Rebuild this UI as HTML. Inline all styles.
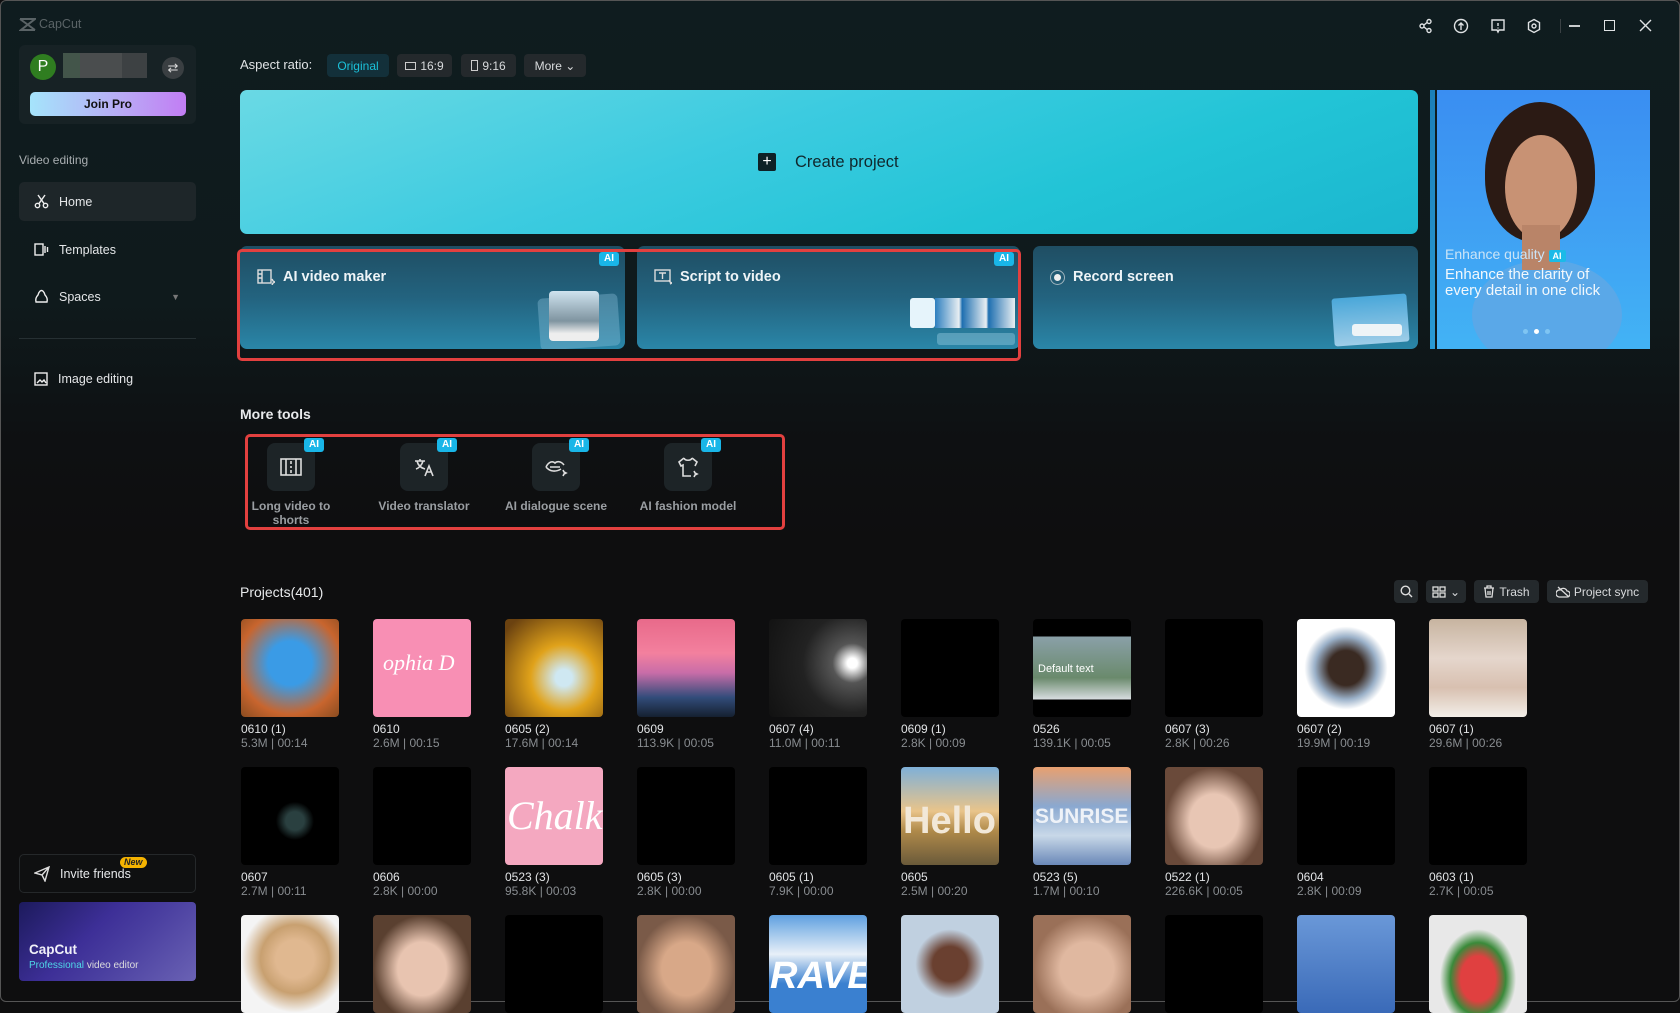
<!DOCTYPE html>
<html><head><meta charset="utf-8"><style>
*{box-sizing:border-box;margin:0;padding:0}
body{width:1680px;height:1002px;overflow:hidden;font-family:"Liberation Sans",sans-serif;color:#e6e8ea;background:#0e0e0f;position:relative}
.bg{position:absolute;left:0;top:0;width:1680px;height:1002px;background:linear-gradient(180deg,#0f1c1f 0px,#0f1a1c 300px,#0e1012 440px,#0e0e0f 540px);border:1px solid #555;border-radius:6px}
.a{position:absolute}
.side-item{position:absolute;left:19px;width:177px;height:39px;display:flex;align-items:center;padding-left:15px;font-size:12.5px;color:#e4e6e8}
.side-item svg{margin-right:10px}
.btn{position:absolute;height:23px;background:#24292c;border-radius:4px;font-size:12px;color:#d8dadc;display:flex;align-items:center;justify-content:center;gap:4px}
.card{position:absolute;top:246px;height:103px;border-radius:7px;background:linear-gradient(180deg,#1f4e63 0%,#23637f 50%,#2a86a8 100%);overflow:hidden}
.card .t{position:absolute;left:17px;top:23px;font-size:14.5px;font-weight:bold;color:#eef4f7;display:flex;align-items:center;gap:8px}
.ai{position:absolute;background:#19b6e8;color:#fff;font-size:10px;font-weight:bold;border-radius:3px;padding:1px 5px;line-height:12px}
.tool{position:absolute;top:443px;width:48px;height:48px;background:#1d2427;border-radius:8px;display:flex;align-items:center;justify-content:center}
.tl{position:absolute;top:499px;font-size:12px;color:#9a9ea2;text-align:center;width:130px;line-height:14px;font-weight:bold}
.th{position:absolute;width:98px;height:98px;border-radius:4px;overflow:hidden;background:#000}
.nm{position:absolute;font-size:12px;color:#e2e4e6}
.mt{position:absolute;font-size:12px;color:#888c90}
.ico{position:absolute;top:18px}
</style></head><body>
<div class="bg"></div>
<div class="a" style="left:19px;top:17px;font-size:12.5px;color:#5a6366;display:flex;align-items:center;gap:3px">
<svg width="17" height="13" viewBox="0 0 17 13"><path d="M1 1h15L2 12h14M1 1l15 11" stroke="#5a6366" stroke-width="2" fill="none"/></svg>CapCut</div>
<svg class="ico" style="left:1418px" width="16" height="16" viewBox="0 0 16 16" fill="none" stroke="#dfe2e4" stroke-width="1.4"><circle cx="4" cy="8" r="2"/><circle cx="11" cy="3.5" r="2"/><circle cx="11" cy="12.5" r="2"/><path d="M6 7l3-2.5M6 9l3 2.5"/></svg>
<svg class="ico" style="left:1453px" width="16" height="16" viewBox="0 0 16 16" fill="none" stroke="#dfe2e4" stroke-width="1.4"><circle cx="8" cy="8" r="6.5"/><path d="M8 12V5M5.5 7.5L8 5l2.5 2.5"/></svg>
<svg class="ico" style="left:1490px" width="16" height="16" viewBox="0 0 16 16" fill="none" stroke="#dfe2e4" stroke-width="1.4"><path d="M2 2h12v10H9l-1 2-1-2H2z"/><path d="M8 5v3M8 9.5v1"/></svg>
<svg class="ico" style="left:1526px" width="16" height="16" viewBox="0 0 16 16" fill="none" stroke="#dfe2e4" stroke-width="1.4"><path d="M8 1.5l5.5 3v7L8 14.5l-5.5-3v-7z"/><circle cx="8" cy="8" r="2"/></svg>
<div class="a" style="left:1560px;top:19px;width:1px;height:14px;background:#3a4144"></div>
<div class="a" style="left:1569px;top:25px;width:11px;height:1.5px;background:#c9ccce"></div>
<div class="a" style="left:1604px;top:20px;width:11px;height:11px;border:1.4px solid #dfe2e4"></div>
<svg class="ico" style="left:1639px;top:19px" width="13" height="13" viewBox="0 0 13 13" stroke="#dfe2e4" stroke-width="1.4"><path d="M1 1l11 11M12 1L1 12"/></svg>

<div class="a" style="left:19px;top:45px;width:177px;height:79px;background:#172225;border-radius:6px"></div>
<div class="a" style="left:30px;top:54px;width:26px;height:26px;border-radius:50%;background:#2f7d20;color:#fff;font-size:16px;display:flex;align-items:center;justify-content:center">P</div>
<div class="a" style="left:63px;top:53px;width:84px;height:25px;background:linear-gradient(90deg,#43554a 0 20%,#4a4d4e 20% 70%,#3d4143 70%)"></div>
<div class="a" style="left:162px;top:57px;width:22px;height:22px;border-radius:50%;background:#3a3f42;color:#ddd;font-size:13px;display:flex;align-items:center;justify-content:center">⇄</div>
<div class="a" style="left:30px;top:92px;width:156px;height:24px;border-radius:5px;background:linear-gradient(90deg,#a5e4fb,#b9a9f5 60%,#c27df4);color:#111;font-size:12px;font-weight:bold;display:flex;align-items:center;justify-content:center">Join Pro</div>

<div class="a" style="left:19px;top:153px;font-size:12px;color:#a8adb0">Video editing</div>
<div class="side-item" style="top:182px;background:#1e2629;border-radius:5px"><svg width="15" height="15" viewBox="0 0 15 15" fill="none" stroke="#eee" stroke-width="1.4"><circle cx="3.5" cy="11.5" r="2.2"/><circle cx="11.5" cy="11.5" r="2.2"/><path d="M4.8 9.8L11 1M10.2 9.8L4 1"/></svg>Home</div>
<div class="side-item" style="top:230px"><svg width="15" height="15" viewBox="0 0 15 15" fill="none" stroke="#eee" stroke-width="1.4"><rect x="1" y="2" width="8" height="11"/><path d="M11 4v7M13.5 5v5"/></svg>Templates</div>
<div class="side-item" style="top:277px"><svg width="15" height="15" viewBox="0 0 15 15" fill="none" stroke="#eee" stroke-width="1.4"><path d="M2 13h11c1-4-1-6-2-7C10 2 8 1.5 7.5 1.5S5 2 4 6c-1 1-3 3-2 7z"/></svg>Spaces<span style="position:absolute;right:16px;font-size:9px;color:#777">▼</span></div>
<div class="a" style="left:19px;top:338px;width:177px;height:1px;background:#263033"></div>
<div class="side-item" style="top:359px"><svg width="14" height="14" viewBox="0 0 14 14" fill="none" stroke="#eee" stroke-width="1.4"><rect x="1" y="1" width="12" height="12"/><path d="M3 11l3-3 2 2 2-2 2 3"/></svg>Image editing</div>

<div class="a" style="left:19px;top:854px;width:177px;height:39px;border:1px solid #25282a;border-radius:5px;background:#0f1011"></div>
<svg class="a" style="left:34px;top:866px" width="16" height="16" viewBox="0 0 16 16" fill="none" stroke="#ddd" stroke-width="1.4"><path d="M1 7L15 1l-4 14-3-6zM8 9l7-8"/></svg>
<div class="a" style="left:60px;top:867px;font-size:12.5px;color:#e6e8ea">Invite friends</div>
<div class="a" style="left:120px;top:857px;background:#f5b301;color:#222;font-size:9px;font-style:italic;font-weight:bold;border-radius:6px;padding:0 4px;line-height:11px">New</div>
<div class="a" style="left:19px;top:902px;width:177px;height:79px;border-radius:4px;background:linear-gradient(135deg,#1c1a5c 0%,#3d2f97 40%,#4a3fa0 60%,#6a62b4 100%);overflow:hidden">
<div style="position:absolute;left:10px;top:40px;font-size:13.5px;font-weight:bold;color:#f0f0f8">CapCut</div>
<div style="position:absolute;left:10px;top:58px;font-size:10px;color:#4fd6e8">Professional <span style="color:#ddd">video editor</span></div></div>

<div class="a" style="left:240px;top:57px;font-size:13px;color:#e0e3e5">Aspect ratio:</div>
<div class="btn" style="left:327px;top:54px;width:62px;background:#13303a;color:#1bc0d8">Original</div>
<div class="btn" style="left:397px;top:54px;width:55px"><span style="display:inline-block;width:11px;height:8px;border:1.2px solid #ccc"></span>16:9</div>
<div class="btn" style="left:461px;top:54px;width:55px"><span style="display:inline-block;width:7px;height:11px;border:1.2px solid #ccc"></span>9:16</div>
<div class="btn" style="left:524px;top:54px;width:62px">More ⌄</div>

<div class="a" style="left:240px;top:90px;width:1178px;height:144px;border-radius:7px;background:linear-gradient(160deg,#6ad9e4 0%,#3ccbe0 40%,#22c4d6 70%,#1bb6cf 100%)"></div>
<div class="a" style="left:758px;top:153px;width:18px;height:18px;background:#0e2126;border-radius:2px;color:#fff;font-size:16px;line-height:17px;text-align:center">+</div>
<div class="a" style="left:795px;top:153px;font-size:16.5px;color:#10272c">Create project</div>

<div class="card" style="left:240px;width:385px"><div class="t"><svg width="18" height="16" viewBox="0 0 18 16" fill="none" stroke="#ddd" stroke-width="1.4"><rect x="1" y="1" width="13" height="13"/><path d="M5 1v13M1 5h4M1 9h4M15 10l1 2 2 1-2 1-1 2"/></svg>AI video maker</div>
<div class="ai" style="right:6px;top:6px">AI</div>
<div style="position:absolute;right:6px;top:50px;width:80px;height:52px;background:rgba(150,200,225,.35);border-radius:5px;transform:rotate(-4deg)"></div>
<div style="position:absolute;right:26px;top:45px;width:50px;height:50px;background:linear-gradient(#cfe3ef,#7f94a0 60%,#eee 85%);border-radius:4px"></div></div>
<div class="card" style="left:637px;width:383px"><div class="t"><svg width="18" height="16" viewBox="0 0 18 16" fill="none" stroke="#ddd" stroke-width="1.4"><rect x="1" y="1" width="15" height="11"/><path d="M5 4h7M8.5 4v6M15 11l1 2 2 1-2 1"/></svg>Script to video</div>
<div class="ai" style="right:6px;top:6px">AI</div>
<div style="position:absolute;right:85px;top:52px;width:25px;height:30px;background:#e6f4fb;border-radius:3px"></div>
<div style="position:absolute;right:5px;top:52px;width:80px;height:30px;background:linear-gradient(90deg,#2d7fbf,#e8eef2 30%,#1e6fb0 34%,#e8eef2 64%,#1e6fb0 67%,#e8eef2)"></div>
<div style="position:absolute;right:5px;top:87px;width:78px;height:12px;background:rgba(160,210,230,.4);border-radius:3px"></div></div>
<div class="a" style="left:237px;top:249px;width:784px;height:112px;border:3px solid #e2403f;border-radius:5px"></div>
<div class="card" style="left:1033px;width:385px"><div class="t"><span style="width:15px;height:15px;border-radius:50%;border:1.5px solid #9fb4bd;display:flex;align-items:center;justify-content:center"><span style="width:7px;height:7px;border-radius:50%;background:#eee"></span></span>Record screen</div>
<div style="position:absolute;right:10px;top:50px;width:75px;height:48px;background:linear-gradient(#4aa7d9,#9ecde8);border-radius:3px;transform:rotate(-4deg)"></div>
<div style="position:absolute;right:16px;top:78px;width:50px;height:12px;background:#eef4f7;border-radius:3px"></div></div>

<div class="a" style="left:1430px;top:90px;width:5px;height:259px;background:linear-gradient(#1b7fb8,#2a9ad4)"></div>
<div class="a" style="left:1437px;top:90px;width:213px;height:259px;overflow:hidden;background:linear-gradient(180deg,#3a8ef2 0%,#3f9ff3 50%,#42b3f5 100%)">
<div style="position:absolute;left:35px;top:170px;width:150px;height:110px;border-radius:50%;background:#5aa8e8"></div>
<div style="position:absolute;left:48px;top:12px;width:110px;height:140px;border-radius:50% 50% 45% 45%;background:#2b1a14"></div>
<div style="position:absolute;left:68px;top:45px;width:72px;height:105px;border-radius:50%;background:#c89274"></div>
<div style="position:absolute;left:85px;top:135px;width:38px;height:45px;background:#b98468"></div>
<div style="position:absolute;left:8px;top:156px;font-size:14px;color:#cbe4f7">Enhance quality <span style="background:#1bbae8;color:#fff;font-size:9px;padding:1px 4px;border-radius:2px;font-weight:bold">AI</span></div>
<div style="position:absolute;left:8px;top:177px;font-size:15px;line-height:16px;color:#f2f8fc">Enhance the clarity of<br>every detail in one click</div>
<div style="position:absolute;left:86px;top:239px;width:5px;height:5px;border-radius:50%;background:#7fc5f3"></div>
<div style="position:absolute;left:97px;top:239px;width:5px;height:5px;border-radius:50%;background:#fff"></div>
<div style="position:absolute;left:108px;top:239px;width:5px;height:5px;border-radius:50%;background:#7fc5f3"></div></div>

<div class="a" style="left:240px;top:406px;font-size:14px;font-weight:bold;color:#e8eaec">More tools</div>
<div class="a" style="left:245px;top:434px;width:540px;height:96px;border:3px solid #e2403f;border-radius:5px"></div>
<div class="tool" style="left:267px"><svg width="22" height="18" viewBox="0 0 22 18" fill="none" stroke="#ddd" stroke-width="1.6"><rect x="1" y="1" width="20" height="16"/><path d="M6 1v16M16 1v16M11 3v3M11 8v2M11 12v3"/></svg></div>
<div class="tool" style="left:400px"><svg width="22" height="22" viewBox="0 0 22 22" fill="none" stroke="#ddd" stroke-width="1.6"><path d="M2 5h10M7 3v2M4 5c1 4 4 7 8 8M10 5c-1 4-4 7-7 8M12 20l4-10 4 10M13.5 16h5"/></svg></div>
<div class="tool" style="left:532px"><svg width="24" height="20" viewBox="0 0 24 20" fill="none" stroke="#ddd" stroke-width="1.6"><path d="M2 10c3-6 7-6 9-4 2-2 6-2 9 2M2 10c4 5 10 5 15 2M6 10h10M19 13l1 2 2 1-2 1-1 2"/></svg></div>
<div class="tool" style="left:664px"><svg width="22" height="22" viewBox="0 0 22 22" fill="none" stroke="#ddd" stroke-width="1.6"><path d="M7 2l-5 4 2 4 2-1v11h8M15 2l5 4-2 4M7 2c1 3 7 3 8 0M17 15l1 2 2 1-2 1-1 2"/></svg></div>
<div class="ai" style="left:304px;top:438px">AI</div><div class="ai" style="left:437px;top:438px">AI</div><div class="ai" style="left:569px;top:438px">AI</div><div class="ai" style="left:701px;top:438px">AI</div>
<div class="tl" style="left:226px">Long video to<br>shorts</div>
<div class="tl" style="left:359px">Video translator</div>
<div class="tl" style="left:491px">AI dialogue scene</div>
<div class="tl" style="left:623px">AI fashion model</div>

<div class="a" style="left:240px;top:584px;font-size:14px;color:#e8eaec">Projects(401)</div>
<div class="btn" style="left:1394px;top:580px;width:24px"><svg width="13" height="13" viewBox="0 0 13 13" fill="none" stroke="#ddd" stroke-width="1.4"><circle cx="5.5" cy="5.5" r="4.3"/><path d="M9 9l3 3"/></svg></div>
<div class="btn" style="left:1426px;top:580px;width:40px"><svg width="14" height="12" viewBox="0 0 14 12" fill="none" stroke="#ddd" stroke-width="1.3"><rect x="1" y="1" width="5" height="4"/><rect x="8" y="1" width="5" height="4"/><rect x="1" y="7" width="5" height="4"/><rect x="8" y="7" width="5" height="4"/></svg>⌄</div>
<div class="btn" style="left:1474px;top:580px;width:65px"><svg width="12" height="13" viewBox="0 0 12 13" fill="none" stroke="#ddd" stroke-width="1.3"><path d="M1 3h10M4 3V1h4v2M2 3l1 9h6l1-9M5 6v4M7 6v4"/></svg>Trash</div>
<div class="btn" style="left:1547px;top:580px;width:101px"><svg width="14" height="12" viewBox="0 0 14 12" fill="none" stroke="#ddd" stroke-width="1.3"><path d="M3 11h8a3 3 0 000-6 4 4 0 00-7-1 3.5 3.5 0 00-1 7zM2 1l11 10"/></svg>Project sync</div>

<div id="grid"></div>
<script>
var X=[241,373,505,637,769,901,1033,1165,1297,1429];
var rows=[
{y:619,items:[["0610 (1)","5.3M | 00:14","radial-gradient(circle at 50% 45%,#3a9be6 30%,#c8652e 70%,#8a4c20)"],
["0610","2.6M | 00:15","#f88fb4"],["0605 (2)","17.6M | 00:14","radial-gradient(circle at 60% 60%,#cfe8f2 10%,#e0a21a 40%,#6b4210 90%)"],
["0609","113.9K | 00:05","linear-gradient(#e86a8a,#f3809e 35%,#c86da8 55%,#324c7a 80%,#152030)"],["0607 (4)","11.0M | 00:11","radial-gradient(circle at 85% 45%,#fff 5%,#555 20%,#222 50%,#111)"],
["0609 (1)","2.8K | 00:09","#000"],["0526","139.1K | 00:05","linear-gradient(#000 0 18%,#8aa0a8 18%,#6a8a6c 60%,#d8dde0 82%,#000 82%)"],
["0607 (3)","2.8K | 00:26","#000"],["0607 (2)","19.9M | 00:19","radial-gradient(ellipse at 50% 50%,#3a2a22 25%,#9ab0c8 45%,#fff 60%)"],["0607 (1)","29.6M | 00:26","linear-gradient(#c7b4a0,#e5d6cc 40%,#d8c0b0 70%,#f2eee8)"]]},
{y:767,items:[["0607","2.7M | 00:11","radial-gradient(circle at 55% 55%,#2a4040 12%,#000 25%)"],["0606","2.8K | 00:00","#000"],
["0523 (3)","95.8K | 00:03","#f4a8c0"],["0605 (3)","2.8K | 00:00","#000"],["0605 (1)","7.9K | 00:00","#000"],
["0605","2.5M | 00:20","linear-gradient(#7fb0d8,#e9c48a 45%,#b08a4a 65%,#6a5a3a)"],["0523 (5)","1.7M | 00:10","linear-gradient(#e8a070,#8aa8d0 40%,#c8d8e8 70%,#6a88b8)"],
["0522 (1)","226.6K | 00:05","radial-gradient(ellipse at 50% 55%,#e8c6b4 35%,#6a4a3a 70%)"],["0604","2.8K | 00:09","#000"],["0603 (1)","2.7K | 00:05","#000"]]},
{y:915,items:[["","","radial-gradient(ellipse at 55% 45%,#e0b890 25%,#c8a070 45%,#f4f4f4 70%)"],["","","radial-gradient(ellipse at 50% 55%,#e8c4b0 35%,#5a4030 70%)"],["","","#000"],
["","","radial-gradient(ellipse at 50% 55%,#d8a888 35%,#7a5a48 70%)"],["","","linear-gradient(#5fa0e0,#e8f0f8 40%,#3a80d0 70%)"],["","","radial-gradient(ellipse at 50% 50%,#6a4030 25%,#c0d0e0 50%)"],
["","","radial-gradient(ellipse at 55% 55%,#e0b8a0 35%,#9a7058 70%)"],["","","#000"],["","","linear-gradient(#6a98d8,#3a6ab8)"],["","","radial-gradient(ellipse at 50% 65%,#e04040 25%,#3a8a3a 40%,#e8e8e8 55%)"]]}];
var h="";
rows.forEach(function(r){r.items.forEach(function(it,i){
h+='<div class="th" style="left:'+X[i]+'px;top:'+r.y+'px;background:'+it[2]+'"></div>';
if(it[0]){h+='<div class="nm" style="left:'+X[i]+'px;top:'+(r.y+103)+'px">'+it[0]+'</div><div class="mt" style="left:'+X[i]+'px;top:'+(r.y+117)+'px">'+it[1]+'</div>';}
});});
document.getElementById("grid").innerHTML=h;
</script>
<div class="a" style="left:383px;top:650px;font-size:22px;font-style:italic;color:#fff;font-family:'Liberation Serif',serif;white-space:nowrap;width:88px;overflow:hidden">ophia D</div>
<div class="a" style="left:507px;top:792px;font-size:40px;font-style:italic;color:#fff;font-family:'Liberation Serif',serif;width:96px;overflow:hidden;white-space:nowrap">Chalk</div>
<div class="a" style="left:903px;top:800px;font-size:38px;font-weight:bold;color:#f2e8d8;width:96px;overflow:hidden">Hello</div>
<div class="a" style="left:1035px;top:805px;font-size:21px;font-weight:bold;color:#eef2f8;width:96px;overflow:hidden">SUNRISE</div>
<div class="a" style="left:770px;top:955px;font-size:38px;font-weight:bold;font-style:italic;color:#fff;width:96px;overflow:hidden">RAVE</div>
<div class="a" style="left:1038px;top:663px;font-size:11px;color:#fff">Default text</div>
</body></html>
